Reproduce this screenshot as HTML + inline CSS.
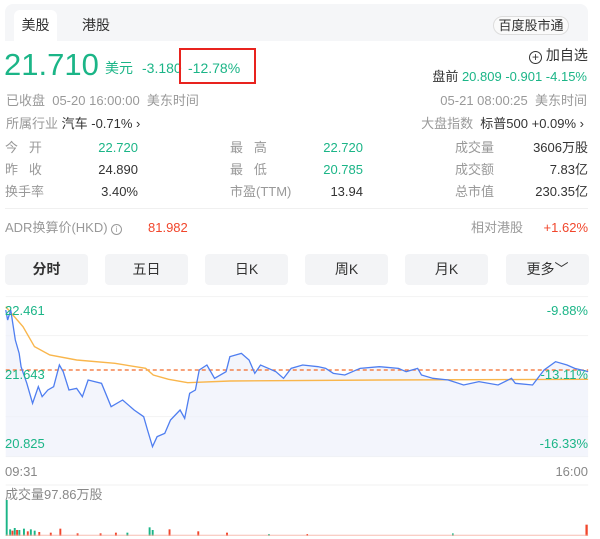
<!DOCTYPE html>
<html><head><meta charset="utf-8"><style>
*{margin:0;padding:0;box-sizing:border-box}
body{width:600px;height:539px;background:#fff;font-family:"Liberation Sans","Noto Sans CJK SC",sans-serif;font-size:13px;line-height:16px;color:#333;position:relative;overflow:hidden}
.a{position:absolute;white-space:nowrap}
.g{color:#1bb587}.r{color:#f1462c}.gr{color:#999}
.btn{position:absolute;top:254px;width:83px;height:31px;background:#f3f4f6;border-radius:4px;text-align:center;line-height:31px;font-size:14px;color:#333}
.v{position:absolute;text-align:right;white-space:nowrap}
</style></head><body>
<div class="a" style="left:5px;top:4px;width:583px;height:37px;background:#f5f6f8;border-radius:8px 8px 0 0"></div>
<div class="a" style="left:14px;top:10px;width:43px;height:31px;background:#fff;border-radius:6px 6px 0 0;text-align:center;line-height:30px;font-size:14px">美股</div>
<div class="a" style="left:82px;top:10px;line-height:30px;font-size:14px">港股</div>
<div class="a" style="left:493px;top:16px;width:76px;height:19px;border:1px solid #ddd;border-radius:10px;background:#fafafa;text-align:center;line-height:17px;font-size:13px">百度股市通</div>

<div class="a g" style="left:4px;top:47px;font-size:31px;line-height:36px">21.710</div>
<div class="a g" style="left:105px;top:60px;font-size:14px">美元</div>
<div class="a g" style="left:142px;top:60px;font-size:14px">-3.180</div>
<div class="a g" style="left:188px;top:60px;font-size:14px">-12.78%</div>
<div class="a" style="left:179px;top:48px;width:77px;height:36px;border:2px solid #e8231e"></div>

<div class="a" style="left:529px;top:47px;font-size:14px"><span style="display:inline-block;width:13px;height:13px;border:1.3px solid #333;border-radius:50%;text-align:center;line-height:10px;font-size:12px;vertical-align:-1px">+</span> 加自选</div>
<div class="a" style="right:13px;top:69px;font-size:13px">盘前 <span class="g">20.809 -0.901 -4.15%</span></div>
<div class="a gr" style="left:6px;top:93px;font-size:13px">已收盘&nbsp; 05-20 16:00:00&nbsp; 美东时间</div>
<div class="a gr" style="right:13px;top:93px;font-size:13px">05-21 08:00:25&nbsp; 美东时间</div>
<div class="a" style="left:6px;top:116px;font-size:13px"><span class="gr">所属行业</span> 汽车 -0.71% ›</div>
<div class="a" style="right:16px;top:116px;font-size:13px"><span class="gr">大盘指数</span>&nbsp; 标普500 +0.09% ›</div>

<div class="a gr" style="left:5px;top:140px">今&nbsp;&nbsp;&nbsp;开</div><div class="v g" style="right:462px;top:140px">22.720</div>
<div class="a gr" style="left:5px;top:162px">昨&nbsp;&nbsp;&nbsp;收</div><div class="v" style="right:462px;top:162px">24.890</div>
<div class="a gr" style="left:5px;top:184px">换手率</div><div class="v" style="right:462px;top:184px">3.40%</div>
<div class="a gr" style="left:230px;top:140px">最&nbsp;&nbsp;&nbsp;高</div><div class="v g" style="right:237px;top:140px">22.720</div>
<div class="a gr" style="left:230px;top:162px">最&nbsp;&nbsp;&nbsp;低</div><div class="v g" style="right:237px;top:162px">20.785</div>
<div class="a gr" style="left:230px;top:184px">市盈(TTM)</div><div class="v" style="right:237px;top:184px">13.94</div>
<div class="a gr" style="left:455px;top:140px">成交量</div><div class="v" style="right:12px;top:140px">3606万股</div>
<div class="a gr" style="left:455px;top:162px">成交额</div><div class="v" style="right:12px;top:162px">7.83亿</div>
<div class="a gr" style="left:455px;top:184px">总市值</div><div class="v" style="right:12px;top:184px">230.35亿</div>
<div class="a" style="left:5px;top:208px;width:583px;height:1px;background:#f0f0f0"></div>
<div class="a gr" style="left:5px;top:220px">ADR换算价(HKD) <span style="display:inline-block;width:11px;height:11px;border:1px solid #999;border-radius:50%;font-size:8px;text-align:center;line-height:9px;vertical-align:0">i</span></div>
<div class="a r" style="left:148px;top:220px">81.982</div>
<div class="a gr" style="left:471px;top:220px">相对港股</div>
<div class="a r" style="right:12px;top:220px">+1.62%</div>

<div class="btn" style="left:5px;font-weight:bold">分时</div>
<div class="btn" style="left:105px">五日</div>
<div class="btn" style="left:205px">日K</div>
<div class="btn" style="left:305px">周K</div>
<div class="btn" style="left:405px">月K</div>
<div class="btn" style="left:506px">更多﹀</div>

<svg class="a" style="left:0;top:290px" width="600" height="249" viewBox="0 0 1566 747" preserveAspectRatio="none">
<g stroke="#f2f2f2"><line x1="15" y1="20" x2="1535" y2="20" vector-effect="non-scaling-stroke"/><line x1="15" y1="137" x2="1535" y2="137" vector-effect="non-scaling-stroke"/><line x1="15" y1="380" x2="1535" y2="380" vector-effect="non-scaling-stroke"/><line x1="15" y1="500" x2="1535" y2="500" vector-effect="non-scaling-stroke"/><line x1="15" y1="585" x2="1535" y2="585" vector-effect="non-scaling-stroke"/></g>
<polygon fill="#eef1fb" opacity="0.7" points="15,60 20,90 28,60 40,150 50,190 55,230 70,280 85,340 100,290 110,320 125,300 140,290 155,225 165,245 180,300 200,295 215,320 230,270 265,280 290,350 320,330 350,360 375,380 385,420 398,470 410,440 430,430 445,390 470,360 482,385 495,310 510,300 520,240 540,225 560,265 590,245 600,200 630,190 650,210 665,250 680,225 700,235 720,245 740,265 760,235 790,225 830,230 850,235 870,250 900,255 940,235 990,230 1040,235 1060,245 1090,235 1100,255 1130,265 1170,270 1210,285 1250,275 1300,285 1335,265 1345,280 1390,285 1420,240 1450,215 1480,225 1500,235 1535,245 1535,500 15,500"/>
<line x1="15" y1="240" x2="1535" y2="240" stroke="#f26a2a" stroke-width="1.3" stroke-dasharray="4,3" vector-effect="non-scaling-stroke"/>
<polyline fill="none" stroke="#f9b64c" stroke-width="1.4" vector-effect="non-scaling-stroke" points="15,50 60,110 90,170 130,195 200,210 300,220 380,235 400,255 440,268 490,278 600,273 1000,270 1535,268"/>
<polyline fill="none" stroke="#4f7ef0" stroke-width="1.3" vector-effect="non-scaling-stroke" points="15,60 20,90 28,60 40,150 50,190 55,230 70,280 85,340 100,290 110,320 125,300 140,290 155,225 165,245 180,300 200,295 215,320 230,270 265,280 290,350 320,330 350,360 375,380 385,420 398,470 410,440 430,430 445,390 470,360 482,385 495,310 510,300 520,240 540,225 560,265 590,245 600,200 630,190 650,210 665,250 680,225 700,235 720,245 740,265 760,235 790,225 830,230 850,235 870,250 900,255 940,235 990,230 1040,235 1060,245 1090,235 1100,255 1130,265 1170,270 1210,285 1250,275 1300,285 1335,265 1345,280 1390,285 1420,240 1450,215 1480,225 1500,235 1535,245"/>
<g fill="#1bb587"><rect x="15" y="630" width="5" height="108"/><rect x="24" y="718" width="5" height="20"/><rect x="36" y="714" width="5" height="24"/><rect x="48" y="720" width="5" height="18"/><rect x="60" y="716" width="5" height="22"/><rect x="78" y="718" width="5" height="20"/><rect x="88" y="722" width="5" height="16"/><rect x="388" y="712" width="5" height="26"/><rect x="396" y="720" width="5" height="18"/><rect x="330" y="728" width="5" height="10"/><rect x="1180" y="730" width="4" height="8"/><rect x="700" y="732" width="4" height="6"/></g>
<g fill="#f1462c"><rect x="30" y="722" width="5" height="16"/><rect x="42" y="720" width="5" height="18"/><rect x="70" y="724" width="5" height="14"/><rect x="100" y="726" width="5" height="12"/><rect x="130" y="728" width="5" height="10"/><rect x="155" y="716" width="5" height="22"/><rect x="200" y="730" width="5" height="8"/><rect x="260" y="730" width="5" height="8"/><rect x="300" y="728" width="5" height="10"/><rect x="440" y="718" width="5" height="20"/><rect x="515" y="724" width="5" height="14"/><rect x="590" y="728" width="5" height="10"/><rect x="1528" y="704" width="6" height="34"/><rect x="800" y="732" width="4" height="6"/></g>
<rect x="15" y="734" width="1520" height="4" fill="#f7b9ad" opacity="0.7"/>
</svg>
<div class="a g" style="left:5px;top:303px">22.461</div>
<div class="a g" style="left:5px;top:367px">21.643</div>
<div class="a g" style="left:5px;top:436px">20.825</div>
<div class="a g" style="right:12px;top:303px">-9.88%</div>
<div class="a g" style="right:12px;top:367px">-13.11%</div>
<div class="a g" style="right:12px;top:436px">-16.33%</div>
<div class="a" style="left:5px;top:464px;color:#888">09:31</div>
<div class="a" style="right:12px;top:464px;color:#888">16:00</div>
<div class="a" style="left:5px;top:487px;color:#888">成交量97.86万股</div>
</body></html>
